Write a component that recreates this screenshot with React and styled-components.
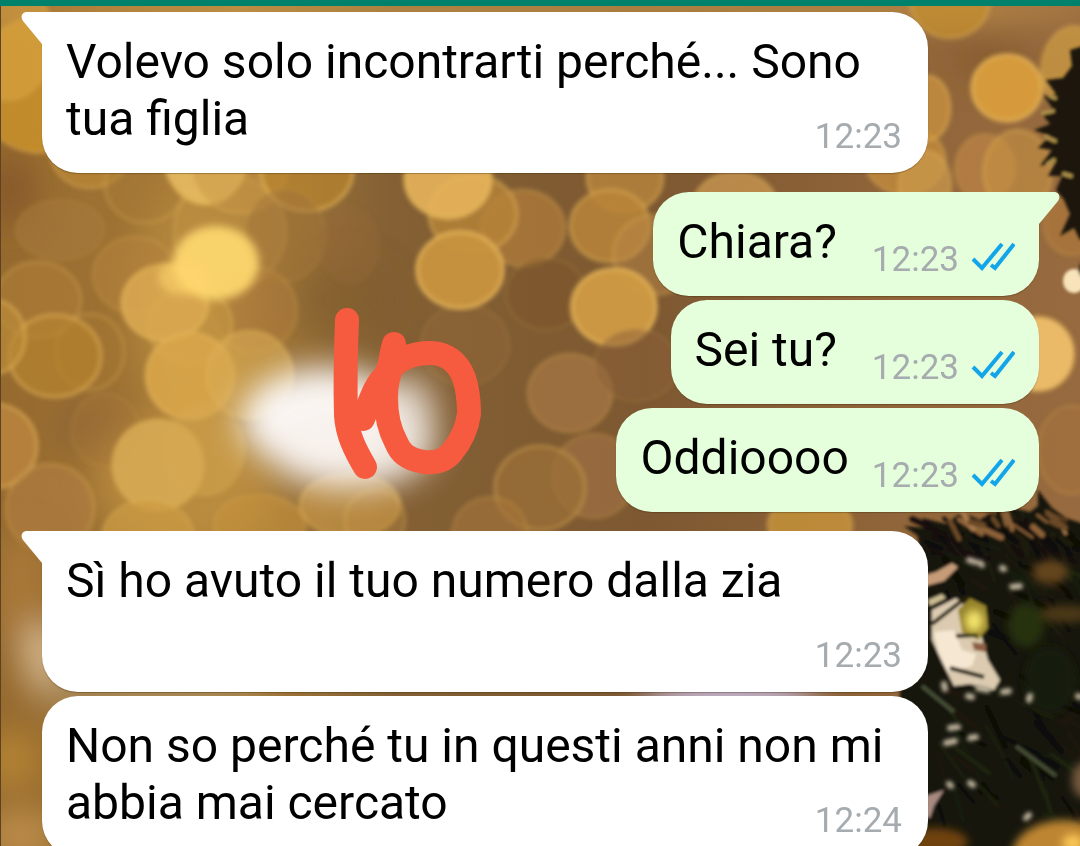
import React from 'react';
import styled, { createGlobalStyle, css } from 'styled-components';

const messages = [
  { id: 1, text: 'Volevo solo incontrarti perché... Sono tua figlia', time: '12:23', first: true },
  { id: 2, mine: true, text: 'Chiara?\u00a0', time: '12:23', first: true },
  { id: 3, mine: true, text: 'Sei tu?\u00a0', time: '12:23' },
  { id: 4, mine: true, text: 'Oddioooo', time: '12:23' },
  { id: 5, text: 'Sì ho avuto il tuo numero dalla zia', time: '12:23', first: true },
  { id: 6, text: 'Non so perché tu in questi anni non mi abbia mai cercato', time: '12:24' },
];

// out of focus lights: cx, cy, rx, ry, fill, opacity, rim opacity
const lights = [
  [40, 85, 66, 68, '#cc942c', 0.8, 0.3],
  [8, 40, 46, 60, '#e0aa48', 0.5, 0.2],
  [90, 150, 40, 38, '#c08a38', 0.6, 0.4],
  [145, 185, 40, 38, '#a97c36', 0.4, 0.3],
  [60, 230, 44, 30, '#a87a3c', 0.5, 0.1],
  [230, 232, 56, 56, '#bd8f44', 0.55, 0.3],
  [206, 150, 43, 54, '#e6ba62', 0.9, 0.7],
  [240, 165, 48, 48, '#c99846', 0.5, 0.3],
  [307, 170, 46, 41, '#b8842e', 0.7, 0.7],
  [135, 275, 42, 38, '#b2803c', 0.6, 0.2],
  [285, 235, 40, 46, '#9f733a', 0.5, 0.1],
  [255, 310, 42, 42, '#ac7b3a', 0.6, 0.2],
  [190, 325, 42, 40, '#c79845', 0.6, 0.4],
  [165, 303, 43, 38, '#dba951', 0.85, 0.7],
  [38, 300, 43, 38, '#ad7d38', 0.6, 0.3],
  [90, 352, 34, 38, '#a4762f', 0.5, 0.3],
  [55, 356, 46, 41, '#b5832f', 0.7, 0.6],
  [-8, 337, 33, 37, '#b98a37', 0.7, 0.6],
  [-6, 446, 43, 42, '#bb8640', 0.8, 0.6],
  [190, 376, 44, 43, '#dba74b', 0.85, 0.6],
  [250, 375, 43, 44, '#d9aa53', 0.6, 0.4],
  [105, 430, 34, 36, '#a5763a', 0.4, 0.1],
  [50, 508, 44, 44, '#b27f42', 0.6, 0.3],
  [158, 465, 46, 46, '#d8ab55', 0.85, 0.2],
  [205, 450, 40, 46, '#d5a850', 0.5, 0.1],
  [148, 538, 46, 38, '#cc9b43', 0.7, 0.3],
  [260, 525, 46, 30, '#c4913e', 0.6, 0.2],
  [350, 505, 50, 32, '#cf9d48', 0.6, 0.4],
  [375, 520, 30, 30, '#c0903f', 0.3, 0.3],
  [350, 245, 30, 40, '#94693a', 0.4, 0],
  [465, 345, 44, 40, '#8f6638', 0.5, 0.1],
  [523, 228, 42, 38, '#a9773a', 0.85, 0.3],
  [473, 214, 44, 39, '#b7843a', 0.8, 0.5],
  [448, 179, 43, 39, '#e7b45b', 0.9, 0.9],
  [460, 270, 43, 38, '#c8933f', 0.95, 1],
  [546, 294, 40, 36, '#7f572b', 0.6, 0.1],
  [625, 178, 38, 34, '#c08b3e', 0.7, 0.5],
  [610, 226, 40, 36, '#b88538', 0.85, 0.5],
  [655, 255, 42, 40, '#b98847', 0.5, 0.3],
  [614, 307, 42, 38, '#d09b43', 0.95, 1],
  [570, 393, 42, 39, '#9f7141', 0.9, 0.25],
  [636, 365, 42, 36, '#8b603a', 0.5, 0.1],
  [594, 476, 42, 42, '#a07141', 0.7, 0.2],
  [540, 488, 45, 42, '#9d7038', 0.7, 0.4],
  [490, 535, 38, 38, '#a5743b', 0.6, 0.2],
  [735, 206, 42, 34, '#cf9d55', 0.7, 0.4],
  [905, 160, 40, 34, '#c88f3c', 0.7, 0.4],
  [925, 185, 26, 34, '#cb9a4c', 0.7, 0.4],
  [950, 0, 40, 38, '#c6902f', 0.7, 0.4],
  [928, 108, 22, 32, '#c58e3d', 0.8, 0.5],
  [985, 168, 30, 34, '#b88143', 0.8, 0.2],
  [1018, 172, 34, 42, '#c79243', 0.6, 0.4],
  [1075, 70, 34, 44, '#d9a746', 0.6, 0.3],
  [1007, 88, 35, 33, '#d99d3c', 0.95, 0.9],
  [1038, 354, 36, 37, '#eebf6c', 0.95, 0.5],
  [1072, 225, 28, 30, '#ad783c', 0.7, 0.2],
  [1072, 450, 34, 44, '#a8733c', 0.5, 0.2],
  [810, 525, 42, 30, '#c8953b', 0.8, 0.4],
];

// small repeatable generator so the needles stay in place on each render
const makeRandom = (seed) => () => {
  seed = (seed * 16807) % 2147483647;
  return seed / 2147483647;
};

const makeNeedles = (seed, count, box, colors, length) => {
  const rand = makeRandom(seed);
  return Array.from({ length: count }, () => {
    const x = box[0] + rand() * box[2];
    const y = box[1] + rand() * box[3];
    const angle = 0.2 + rand() * 1.1;
    const size = length * (0.4 + rand());
    return {
      d: `M${x.toFixed(1)} ${y.toFixed(1)}l${(Math.cos(angle) * size).toFixed(1)} ${(Math.sin(angle) * size).toFixed(1)}`,
      color: colors[Math.floor(rand() * colors.length)],
      width: 2 + rand() * 4,
    };
  });
};

const needles = [
  ...makeNeedles(77, 60, [912, 514, 150, 40], ['#14110a', '#1d1a0b', '#0c0d07'], 26),
  ...makeNeedles(311, 90, [935, 530, 145, 290], ['#161b0c', '#0a0c06', '#1b200f', '#100f08', '#1e190b'], 32),
  ...makeNeedles(58, 16, [950, 506, 120, 24], ['#8d6238', '#a97a4d', '#6b4a25'], 20),
];

function Wallpaper() {
  return (
    <WallpaperSvg viewBox="0 0 1080 846" preserveAspectRatio="xMinYMin slice" aria-hidden="true">
      <defs>
        <linearGradient id="base" x1="0" y1="0" x2="1" y2="0">
          <stop offset="0" stopColor="#966a2f" />
          <stop offset="0.22" stopColor="#a67b39" />
          <stop offset="0.36" stopColor="#846034" />
          <stop offset="0.6" stopColor="#7d5831" />
          <stop offset="0.85" stopColor="#92663a" />
          <stop offset="1" stopColor="#976a3f" />
        </linearGradient>
        <filter id="soft"><feGaussianBlur stdDeviation="2" /></filter>
        <filter id="glow" x="-50%" y="-50%" width="200%" height="200%"><feGaussianBlur stdDeviation="4" /></filter>
        <filter id="needleSoft"><feGaussianBlur stdDeviation="1.6" /></filter>
        <filter id="haze" x="-50%" y="-50%" width="200%" height="200%"><feGaussianBlur stdDeviation="16" /></filter>
      </defs>
      <rect width="1080" height="846" fill="url(#base)" />
      <g filter="url(#haze)">
        <ellipse cx="190" cy="300" rx="60" ry="120" fill="#c2933f" opacity="0.5" />
        <ellipse cx="185" cy="480" rx="90" ry="70" fill="#c79746" opacity="0.6" />
        <ellipse cx="10" cy="190" rx="24" ry="36" fill="#80532a" opacity="0.7" />
        <ellipse cx="90" cy="425" rx="34" ry="22" fill="#835a35" opacity="0.6" />
        <ellipse cx="345" cy="300" rx="50" ry="40" fill="#7d5a2a" opacity="0.5" />
        <ellipse cx="540" cy="6" rx="560" ry="14" fill="#d8a650" opacity="0.8" />
        <ellipse cx="990" cy="60" rx="40" ry="18" fill="#7f5524" opacity="0.6" />
      </g>
      <g filter="url(#soft)">
        {lights.map(([cx, cy, rx, ry, fill, opacity, rim]) => (
          <ellipse
            key={`${cx}-${cy}`}
            cx={cx}
            cy={cy}
            rx={rx}
            ry={ry}
            fill={fill}
            fillOpacity={opacity}
            stroke="#e6b65a"
            strokeOpacity={rim * 0.75}
            strokeWidth="4"
          />
        ))}
      </g>
      <g filter="url(#glow)">
        <ellipse cx="216" cy="263" rx="43" ry="37" fill="#ffd970" opacity="0.9" />
        <ellipse cx="184" cy="277" rx="26" ry="18" fill="#ffd56c" opacity="0.6" />
      </g>
      <g filter="url(#haze)">
        <ellipse cx="20" cy="590" rx="26" ry="60" fill="#ad7c3c" opacity="0.8" />
        <ellipse cx="42" cy="655" rx="18" ry="34" fill="#dfc4a0" opacity="0.9" />
        <ellipse cx="10" cy="760" rx="30" ry="30" fill="#b98836" opacity="0.8" />
        <ellipse cx="20" cy="835" rx="40" ry="26" fill="#c39450" opacity="0.8" />
        <ellipse cx="150" cy="694" rx="120" ry="20" fill="#a98b5c" />
        <ellipse cx="730" cy="694" rx="90" ry="20" fill="#c9bde0" />
        <ellipse cx="325" cy="420" rx="84" ry="52" fill="#fbf8f6" />
        <ellipse cx="350" cy="445" rx="84" ry="44" fill="#f7f1ed" opacity="0.9" />
        <ellipse cx="410" cy="420" rx="26" ry="44" fill="#eee6df" opacity="0.8" />
      </g>

      <g filter="url(#needleSoft)">
        <path
          d="M1090 44L1070 50 1072 66 1063 78 1046 80 1056 94 1044 96 1052 108 1042 114 1050 124 1034 130 1050 136 1038 148 1052 150 1040 166 1056 162 1048 176 1062 176 1056 190 1064 200 1070 214 1060 236 1074 228 1080 240H1090Z"
          fill="#1c180d"
        />
        <path d="M1043 113l10-2M1046 137l9 4M1048 164l6-4M1064 174l7 2M1050 96l5 2" stroke="#ad9048" strokeWidth="4" strokeLinecap="round" />
        <ellipse cx="1074" cy="281" rx="11" ry="12" fill="#f8e3bb" />
        <path d="M1081 262l-3 8 3 8z" fill="#17140a" />
        <path
          d="M918 536L904 526 926 528 922 518 946 524 962 512 980 520 1004 506 1030 512 1038 506 1038 490 1052 508 1066 518 1084 524V850H900V690L926 650Z"
          fill="#12120a"
        />
        {needles.map((n) => (
          <path key={n.d} d={n.d} stroke={n.color} strokeWidth={n.width} strokeLinecap="round" />
        ))}
        <path d="M922 576l14-4 16-9 6 4-14 14-22 6z" fill="#c69c78" />
        <path d="M928 600l14-6 4 4-16 8z" fill="#cdbd93" />
        <path d="M932 610l24-12 16 14 10 26 6 22 12 20-6 10-24-6-16 2-12-24-10-22z" fill="#dccbb0" />
        <path d="M934 632l20-2 8 20 14 4-4 12-24 6-10-20z" fill="#f5e7d2" />
        <path d="M958 610l12-12 16 8 2 22-10 12-16-8z" fill="#95822a" />
        <path d="M932 624l36-28M956 636l22-1M950 668l34 9" stroke="#25200f" strokeWidth="4" />
        <path d="M972 642l14 2v8l-12-2z" fill="#8d5e42" />
        <path d="M922 686l32 26M1016 746l40 30" stroke="#444d34" strokeWidth="4" />
        <path d="M926 796l18-6-10 16-4 12-6-2z" fill="#a88a80" />
      </g>
      <g filter="url(#glow)">
        <ellipse cx="974" cy="621" rx="9" ry="11" fill="#f3e36c" />
        <ellipse cx="1050" cy="572" rx="18" ry="12" fill="#63451c" />
        <ellipse cx="1066" cy="614" rx="26" ry="9" fill="#4b3712" />
        <ellipse cx="1026" cy="625" rx="18" ry="22" fill="#26330f" />
        <ellipse cx="1050" cy="680" rx="26" ry="34" fill="#161c0a" />
        <ellipse cx="1084" cy="780" rx="12" ry="18" fill="#76583c" />
        <ellipse cx="934" cy="842" rx="34" ry="14" fill="#70420f" />
        <ellipse cx="1064" cy="856" rx="52" ry="36" fill="#bd8531" />
        <ellipse cx="1073" cy="843" rx="10" ry="8" fill="#fbc856" />
      </g>
      <path
        filter="url(#soft)"
        d="M969 560l6 2M980 563l2 2M1002 568l2 1M1012 587l8-1M944 684l1 5M968 696l4 1M978 688l10 2M1030 696l-1 4M950 728l8-1M970 738l6-1M946 743l9-2M949 784l2 2M970 783l3 2M1026 818l3-3M1003 692l6-1M1078 696l2 1"
        stroke="#c2b7a0"
        strokeWidth="6"
        strokeLinecap="round"
      />
      <rect width="1" height="846" fill="#5b4220" />

      <g fill="none" stroke="#f65b3f" strokeWidth="24" strokeLinecap="round" strokeLinejoin="round">
        <path d="M347 320C346 345 345 380 346 415C347 434 355 450 365 467" />
        <path d="M394 344C390 356 391 368 385 376C374 386 370 402 363 419" />
        <path d="M387 372C398 359 412 353 430 353C446 353 458 362 464 378C468 390 469 402 469 414C467 428 462 440 452 452C444 462 434 463 424 462C406 459 400 452 396 442C388 427 386 412 386 398C386 386 388 374 394 362" />
      </g>
    </WallpaperSvg>
  );
}

function ReadTicks() {
  return (
    <TicksSvg viewBox="0 0 44 36" role="img" aria-label="Letto">
      <path d="M2 17L11 26L31 2" />
      <path d="M20 23L24 26L43 2" />
    </TicksSvg>
  );
}

function Tail({ mine }) {
  return (
    <TailSvg $mine={mine} viewBox="0 0 22 33" aria-hidden="true">
      <path d={mine ? 'M0 0H16C21 0 23 5 20 9L1 32V33H0Z' : 'M22 0H6C1 0-1 5 2 9L21 32V33H22Z'} />
    </TailSvg>
  );
}

function Message({ text, time, mine, first }) {
  return (
    <Bubble $mine={mine} $first={first}>
      {first && <Tail mine={mine} />}
      <MessageText $mine={mine}>{text}</MessageText>
      <Meta>
        <time>{time}</time>
        {mine && <ReadTicks />}
      </Meta>
    </Bubble>
  );
}

export default function App() {
  return (
    <>
      <GlobalStyle />
      <Screen>
        <TopBar />
        <Chat>
          <Wallpaper />
          <MessageList>
            {messages.map((m, i) => (
              <MessageRow key={m.id} $mine={m.mine} $spaced={m.first && i > 0}>
                <Message {...m} />
              </MessageRow>
            ))}
          </MessageList>
        </Chat>
      </Screen>
    </>
  );
}

const GlobalStyle = createGlobalStyle`
  * {
    box-sizing: border-box;
  }

  body {
    margin: 0;
    font-family: Roboto, 'Liberation Sans', sans-serif;
  }
`

const Screen = styled.div`
  display: flex;
  flex-direction: column;
  height: 100vh;
  overflow: hidden;
`

const TopBar = styled.header`
  flex: none;
  height: 6px;
  background: #00816b;
`

const Chat = styled.main`
  position: relative;
  flex: 1;
  min-height: 0;
`

const WallpaperSvg = styled.svg`
  position: absolute;
  top: -6px;
  left: 0;
  width: 100%;
  height: calc(100% + 6px);
  clip-path: inset(6px 0 0 0);
`

const MessageList = styled.ul`
  position: relative;
  display: flex;
  flex-direction: column;
  gap: 4px;
  margin: 0;
  padding: 6px 41px 0 42px;
  list-style: none;
`

const MessageRow = styled.li`
  display: flex;
  justify-content: ${({ $mine }) => ($mine ? 'flex-end' : 'flex-start')};
  margin-top: ${({ $spaced }) => ($spaced ? '15px' : '0')};
`

const Bubble = styled.div`
  position: relative;
  border-radius: 36px;
  background: #ffffff;
  box-shadow: 0 1px 1px rgba(60, 40, 10, 0.35);

  ${({ $mine }) => $mine ? css`
    display: flex;
    align-items: flex-end;
    gap: 23px;
    padding: 21px 24px 26px;
    background: #e5ffdc;
  ` : css`
    display: grid;
    width: calc(100% - 111px);
    padding: 21px 26px 26px 24px;
  `}

  ${({ $first, $mine }) => $first && ($mine
    ? 'border-top-right-radius: 0;'
    : 'border-top-left-radius: 0;')}
`

// time shares the grid cell with the text, on its last line
const MessageText = styled.p`
  grid-area: 1 / 1;
  min-height: ${({ $mine }) => ($mine ? '57px' : '114px')};
  margin: 0;
  color: #000000;
  font-size: 48px;
  line-height: 57px;
`

const Meta = styled.div`
  grid-area: 1 / 1;
  align-self: end;
  justify-self: end;
  display: flex;
  align-items: center;
  gap: 12px;
  margin-bottom: -11px;
  color: #a5abae;
  font-size: 35px;
  line-height: 42px;
`

const TicksSvg = styled.svg`
  width: 44px;
  height: 36px;
  fill: none;
  stroke: #12a5ea;
  stroke-width: 4;
`

const TailSvg = styled.svg`
  position: absolute;
  top: 0;
  ${({ $mine }) => ($mine ? 'right' : 'left')}: -21px;
  width: 22px;
  height: 33px;
  fill: ${({ $mine }) => ($mine ? '#e5ffdc' : '#ffffff')};
`
